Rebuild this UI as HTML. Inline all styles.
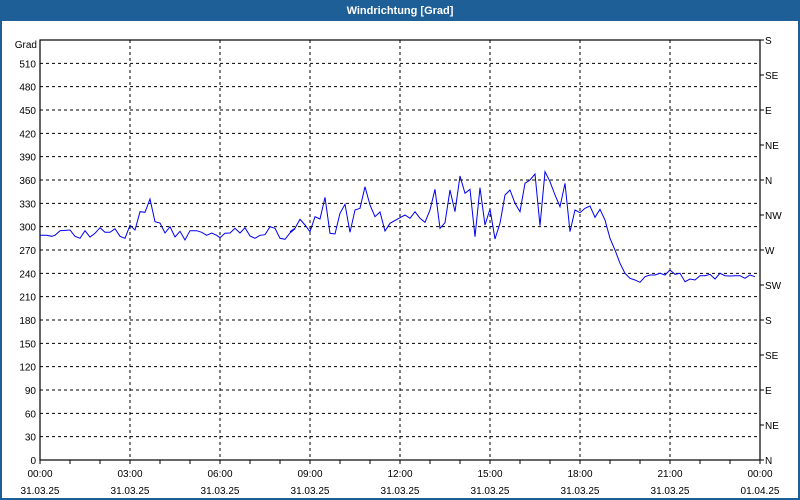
<!DOCTYPE html>
<html><head><meta charset="utf-8"><style>
body{margin:0;width:800px;height:500px;overflow:hidden;background:#fff;font-family:"Liberation Sans",sans-serif}
</style></head><body>
<svg id="s" width="800" height="500" xmlns="http://www.w3.org/2000/svg" style="position:absolute;left:0;top:0">
<rect x="0" y="0" width="800" height="500" fill="#1d5f96"/>
<rect x="2" y="21" width="796" height="477" fill="#fff"/>
<text x="400" y="14" fill="#fff" font-size="11" font-weight="bold" text-anchor="middle" font-family="Liberation Sans,sans-serif">Windrichtung [Grad]</text>
<g id="g"></g>
</svg>
<script>
var g=document.getElementById('g'),h='';
var L=40,R=760,T=40,B=460;
for(var v=30;v<=510;v+=30){var y=B-v*420/540;h+='<line x1="'+L+'" x2="'+R+'" y1="'+y+'" y2="'+y+'" stroke="#000" stroke-dasharray="3,3"/>';
}
for(var v=0;v<=510;v+=30){var y=B-v*420/540;h+='<text x="36" y="'+(y+4)+'" font-size="10" text-anchor="end">'+v+'</text>';}
h+='<text x="37" y="48" font-size="10" text-anchor="end">Grad</text>';
for(var i=1;i<8;i++){var x=L+i*90;h+='<line x1="'+x+'" x2="'+x+'" y1="'+T+'" y2="'+B+'" stroke="#000" stroke-dasharray="3,3"/>';}
for(var i=0;i<=24;i++){var x=L+i*30;h+='<line x1="'+x+'" x2="'+x+'" y1="'+B+'" y2="'+(B+4)+'" stroke="#000"/>';}
var lab=['00:00','03:00','06:00','09:00','12:00','15:00','18:00','21:00','00:00'];
for(var i=0;i<=8;i++){var x=L+i*90;h+='<text x="'+x+'" y="477" font-size="10" text-anchor="middle">'+lab[i]+'</text><text x="'+x+'" y="494" font-size="10" text-anchor="middle">'+(i==8?'01.04.25':'31.03.25')+'</text>';}
var dir=['S','SE','E','NE','N','NW','W','SW','S','SE','E','NE','N'];
for(var i=0;i<13;i++){var y=T+i*35;h+='<line x1="'+R+'" x2="'+(R+4)+'" y1="'+y+'" y2="'+y+'" stroke="#000"/><text x="765" y="'+(y+4)+'" font-size="10">'+dir[i]+'</text>';}
h+='<rect x="'+L+'" y="'+T+'" width="'+(R-L)+'" height="'+(B-T)+'" fill="none" stroke="#000" stroke-width="1.2"/>';
var z4=[0,226,20,226,35,229,45,226,60,212,90,210,105,229,120,235,135,212,150,231,165,220,180,203,195,217,210,217,225,206,240,229,255,235,270,196,285,210,300,155,315,157,330,117,345,185,360,189,375,219,390,200,405,231,420,214,435,240,450,212,470,212,485,217,500,226,515,219,530,226,540,233,555,220,570,219,585,205,600,219,615,203,630,228,645,235,660,226,675,224,690,200,705,205,720,235,735,238,750,219,765,206];
var z5=[0,215,15,205,30,178,45,195,60,215,75,170,90,177,105,112,120,220,135,222,150,160,165,133,180,217,195,150,210,145,225,80,240,135,255,170,270,156,285,213,300,190,330,173,345,165,360,175,375,155,390,175,405,187,420,150,435,88,450,205,465,188,480,90,495,155,510,48,525,100,540,88,555,230,570,83,585,195,600,147,615,237,630,190,645,105,660,90,675,130,690,155];
var z6=[15,70,30,60,45,42,60,197,75,35,90,65,105,105,120,140,135,70,150,215,165,150,180,158,195,145,210,138,225,172,240,148,255,180,270,235,285,270,300,310,315,340,330,355,345,360,360,367,375,350,390,345,405,345,420,340,435,345,450,330,465,343,480,340,495,365,510,357,525,360,540,347,555,347,570,343,585,357,600,340,615,347,630,348,645,347,660,347,675,355,690,345,705,350];
var pts=[];function add(a,ox,oy){for(var i=0;i<a.length;i+=2)pts.push((ox+a[i]/3).toFixed(1)+','+(oy+a[i+1]/3).toFixed(1));}
add(z4,40,160);add(z5,290,160);add(z6,520,160);
h+='<polyline points="'+pts.join(' ')+'" fill="none" stroke="#0000ee" stroke-width="1"/>';
g.innerHTML=h;
</script>
</body></html>
